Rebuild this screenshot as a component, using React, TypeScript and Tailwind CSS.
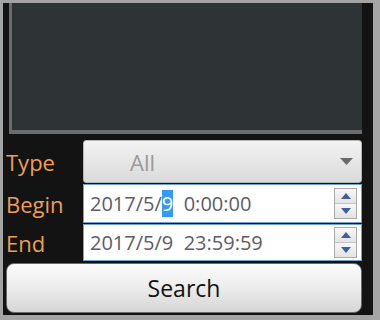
import React from "react";

function Spinner() {
  return (
    <div className="flex flex-col w-[23px] h-[31px] border border-[#a9a9a9] bg-[#ececec]">
      <div className="flex-1 flex items-center justify-center border-b border-[#c4c4c4] bg-gradient-to-b from-[#f7f7f7] to-[#e4e4e4]">
        <svg width="10" height="6" viewBox="0 0 10 6"><polygon points="5,0 10,6 0,6" fill="#3f5f9f" /></svg>
      </div>
      <div className="flex-1 flex items-center justify-center bg-gradient-to-b from-[#f7f7f7] to-[#e4e4e4]">
        <svg width="10" height="6" viewBox="0 0 10 6"><polygon points="0,0 10,0 5,6" fill="#3f5f9f" /></svg>
      </div>
    </div>
  );
}

export default function App() {
  const font = { fontFamily: '"Open Sans", "Noto Sans", sans-serif' };
  return (
    <div className="w-[380px] h-[320px] bg-[#a4a4a4] pl-[3px] pt-[3px] pr-[7px] pb-[5px]" style={font}>
      <div className="w-full h-full bg-[#131313] flex flex-col">
        <div className="ml-[6px] w-[353px] h-[131px] bg-[#2e3336] border-l-[3px] border-b-[4px] border-[#6a6c6d]" />
        <div className="flex items-stretch mt-[6px] h-[43px]">
          <div className="w-[80px] pl-[3px] flex items-center text-[22px] text-[#ee9f52] leading-none">Type</div>
          <div className="w-[279px] rounded-[3px] border border-[#b4b4b4] bg-gradient-to-b from-[#f3f3f3] to-[#dadada] flex items-center relative">
            <span className="absolute left-[46px] text-[22px] text-[#9a9a9a] leading-none">All</span>
            <svg className="absolute right-[8px]" width="13" height="7" viewBox="0 0 13 7"><polygon points="0,0 13,0 6.5,7" fill="#6a6a6a" /></svg>
          </div>
        </div>
        <div className="flex items-stretch mt-[1px] h-[39px]">
          <div className="w-[80px] pl-[3px] flex items-center text-[22px] text-[#ee9f52] leading-none">Begin</div>
          <div className="w-[279px] bg-white border border-[#6fa0cf] flex items-center justify-between pl-[6px] pr-[4px]">
            <span className="text-[20px] text-[#5d5d68] leading-none whitespace-pre">2017/5/<span className="bg-[#3399ff] text-white">9</span>  0:00:00</span>
            <Spinner />
          </div>
        </div>
        <div className="flex items-stretch mt-[1px] h-[37px]">
          <div className="w-[80px] pl-[3px] flex items-center text-[22px] text-[#ee9f52] leading-none">End</div>
          <div className="w-[279px] bg-white border border-[#6fa0cf] flex items-center justify-between pl-[6px] pr-[4px]">
            <span className="text-[20px] text-[#5d5d68] leading-none whitespace-pre">2017/5/9  23:59:59</span>
            <Spinner />
          </div>
        </div>
        <div className="ml-[3px] mt-[2px] w-[356px] h-[50px] rounded-[8px] border border-[#6a6a6a] bg-gradient-to-b from-[#fbfbfb] via-[#ececec] to-[#d6d6d6] flex items-center justify-center text-[23px] text-[#111] leading-none">
          Search
        </div>
      </div>
    </div>
  );
}
